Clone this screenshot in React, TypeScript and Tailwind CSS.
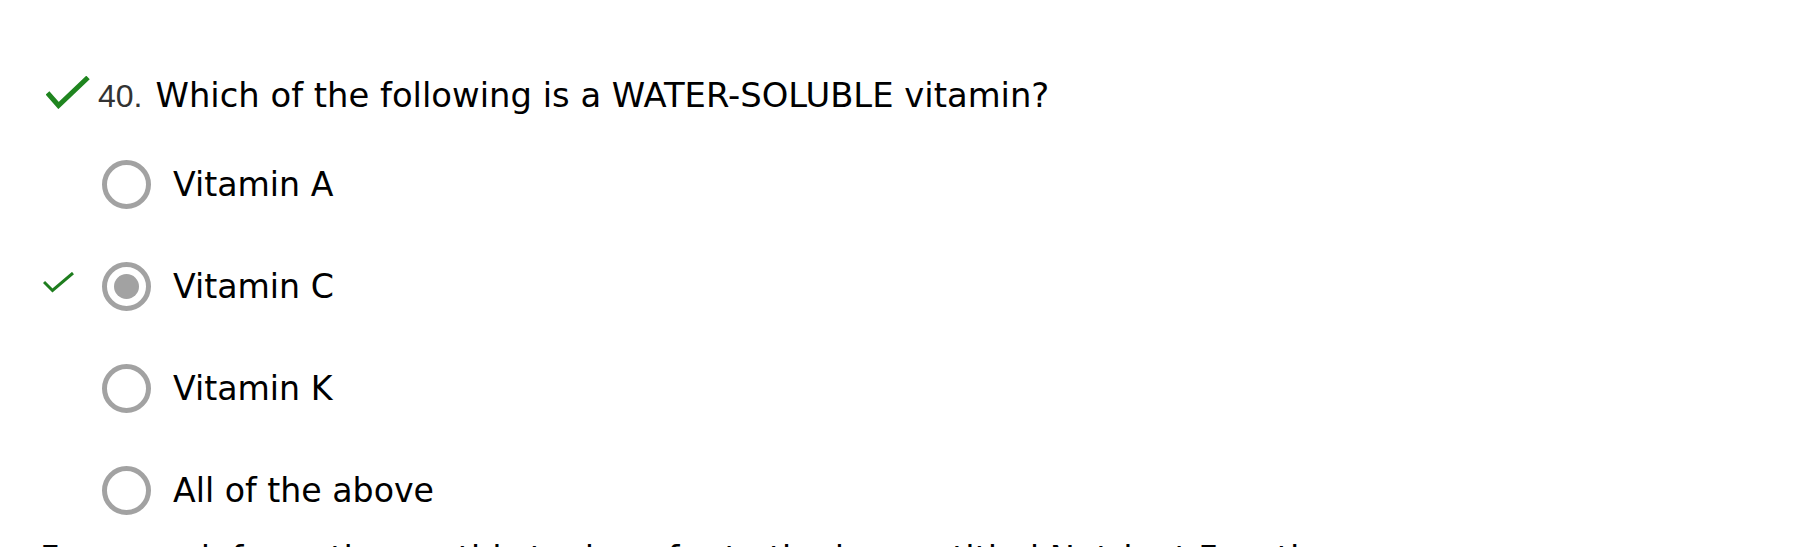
const options = [
  { label: 'Vitamin A', picked: false },
  { label: 'Vitamin C', picked: true },
  { label: 'Vitamin K', picked: false },
  { label: 'All of the above', picked: false },
];

const BigCheck = () => (
  <svg width="44" height="33" viewBox="0 0 44 33" className="shrink-0">
    <path d="M1.5 17 L12.5 29.5 L42 1.5" fill="none" stroke="#1f851f" strokeWidth="5" />
  </svg>
);

const SmallCheck = () => (
  <svg width="31" height="21" viewBox="0 0 31 21">
    <path d="M1 10 L9.5 18.5 L30 1" fill="none" stroke="#1e7d1e" strokeWidth="3" />
  </svg>
);

const Radio = ({ on }: { on: boolean }) => (
  <div className="w-[49px] h-[49px] shrink-0 rounded-full border-[5px] border-[#a2a2a2] flex items-center justify-center">
    {on && <div className="w-[25px] h-[25px] rounded-full bg-[#a2a2a2]"></div>}
  </div>
);

export default function App() {
  return (
    <div className="w-[1800px] h-[547px] overflow-hidden bg-white pl-[40px] pt-[76px] font-['DejaVu_Sans',sans-serif] text-[33.2px] leading-[40px] text-black">
      {/* question line */}
      <div className="flex items-start h-[40px]">
        <div className="ml-[6px]">
          <BigCheck />
        </div>
        <span className="ml-[8px] font-['Liberation_Sans',sans-serif] text-[32px] text-[#333]">40.</span>
        <span className="ml-[13px] text-[33.8px]">Which of the following is a WATER-SOLUBLE vitamin?</span>
      </div>

      {/* answers */}
      <div className="flex flex-col gap-[53px] mt-[44px]">
        {options.map((o) => (
          <div key={o.label} className="flex items-center h-[49px]">
            <div className="w-[62px] shrink-0 pl-[3px] pb-[8px]">{o.picked && <SmallCheck />}</div>
            <Radio on={o.picked} />
            <span className="ml-[22px]">{o.label}</span>
          </div>
        ))}
      </div>

      <p className="mt-[24px] whitespace-nowrap text-[33.6px]">
        For more information on this topic, refer to the lesson titled Nutrient Functions.
      </p>
    </div>
  );
}
